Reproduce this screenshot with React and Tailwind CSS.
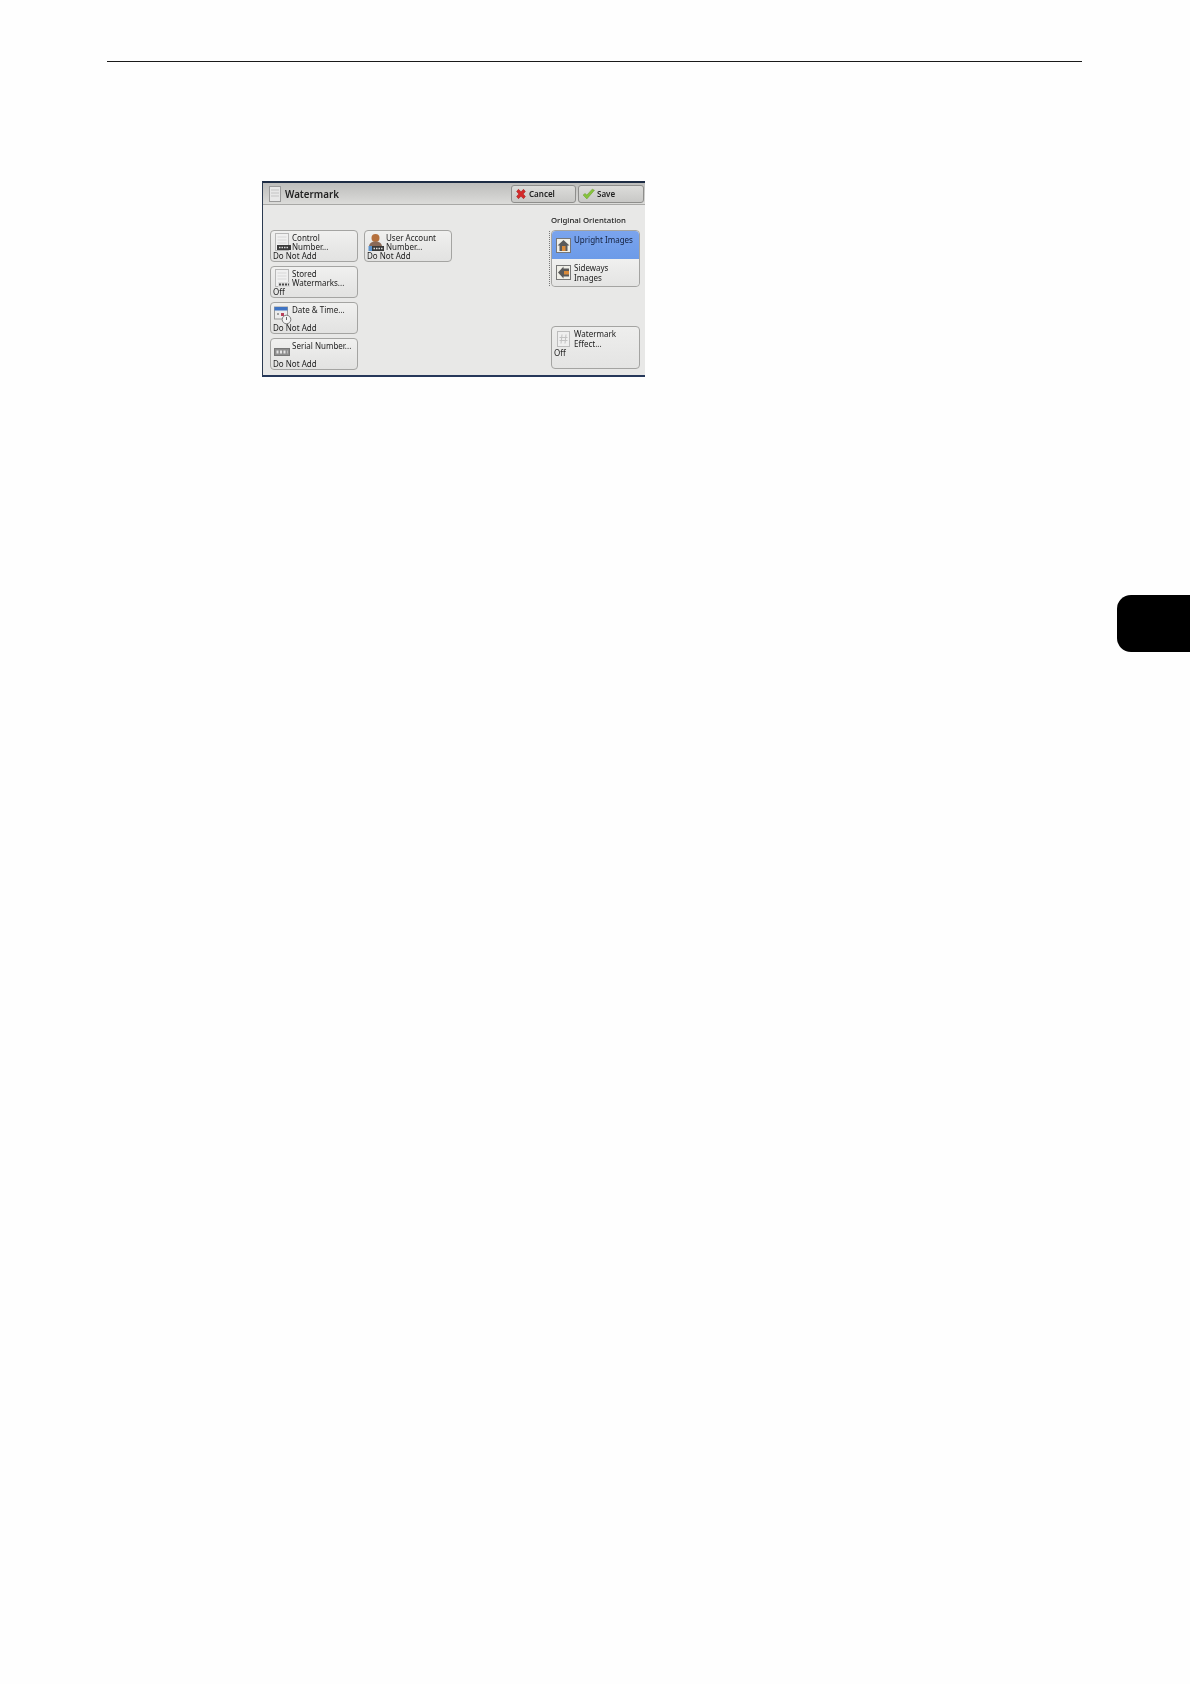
function DocIcon({ children }) {
  return (
    <svg width="17" height="20" viewBox="0 0 17 20" className="shrink-0">
      <rect x="1.500" y="0.500" width="13" height="17" fill="#f0f0f0" stroke="#b8b8b8" />
      <path d="M3.500 4h9M3.500 7h9M3.500 10h9" stroke="#d8d8d8" strokeWidth="1" />
      {children}
    </svg>
  );
}

const ControlIcon = () => (
  <DocIcon>
    <rect x="3" y="12" width="14" height="5" fill="#3c3c3c" />
    <path d="M5 14.500h10" stroke="#d8d8d8" strokeWidth="1.500" strokeDasharray="1.500 1" />
  </DocIcon>
);

const StoredIcon = () => (
  <DocIcon>
    <rect x="4" y="13" width="12" height="5" fill="#dcdcdc" />
    <path d="M5 15.500h10" stroke="#4a4a4a" strokeWidth="2" strokeDasharray="2 1" />
  </DocIcon>
);

const DateIcon = () => (
  <svg width="18" height="20" viewBox="0 0 18 20" className="shrink-0">
    <rect x="0.500" y="2" width="13" height="12" fill="#ececec" stroke="#9a9a9a" />
    <rect x="0.500" y="2" width="13" height="3.500" fill="#3f74c4" />
    <rect x="7" y="8" width="3" height="3" fill="#b8405a" />
    <rect x="3" y="8" width="2" height="2" fill="#a0a0a0" />
    <circle cx="12.500" cy="14.500" r="4.300" fill="#f4f4f4" stroke="#7c7c7c" />
    <path d="M12.500 12v3" stroke="#666" strokeWidth="1" />
  </svg>
);

const SerialIcon = () => (
  <svg width="17" height="20" viewBox="0 0 17 20" className="shrink-0">
    <rect x="0.500" y="7.500" width="15" height="7" fill="#8e8e8e" stroke="#777" />
    <path d="M2.500 11h11" stroke="#e4e4e4" strokeWidth="3" strokeDasharray="2 1.500" />
  </svg>
);

const UserIcon = () => (
  <svg width="17" height="20" viewBox="0 0 17 20" className="shrink-0">
    <circle cx="7.500" cy="5" r="4" fill="#b5703c" />
    <path d="M1 14c0-4 3-5.500 6.500-5.500S14 10 14 14z" fill="#8a6a58" />
    <rect x="0.500" y="13" width="4" height="5" fill="#5b93cf" />
    <rect x="4" y="13" width="12" height="5" fill="#3a3a3a" />
    <path d="M5.500 15.500h9" stroke="#ddd" strokeWidth="1.500" strokeDasharray="1.500 1" />
  </svg>
);

const EffectIcon = () => (
  <svg width="13" height="16" viewBox="0 0 13 16" className="shrink-0">
    <rect x="0.500" y="0.500" width="12" height="15" fill="#efefef" stroke="#bdbdbd" />
    <path d="M5 3.500l-1 9M9 3.500l-1 9M2.500 6.500h8M2.500 9.500h8" stroke="#c2c2c2" strokeWidth="1" fill="none" />
  </svg>
);

const HouseUp = () => (
  <svg width="15" height="15" viewBox="0 0 15 15" className="shrink-0">
    <rect x="0.500" y="0.500" width="14" height="14" fill="#f0efe8" stroke="#777" />
    <path d="M7.500 2L1.500 7.500h2V13h8V7.500h2z" fill="#5a5a5a" />
    <rect x="6" y="8" width="3.500" height="5" fill="#d98a3a" />
  </svg>
);

const HouseSide = () => (
  <svg width="15" height="15" viewBox="0 0 15 15" className="shrink-0">
    <rect x="0.500" y="0.500" width="14" height="14" fill="#f0efe8" stroke="#777" />
    <path d="M2 7.500L7.500 1.500v2H13v8H7.500v2z" fill="#5a5a5a" />
    <rect x="8" y="6" width="5" height="3.500" fill="#d98a3a" />
  </svg>
);

function FeatureButton({ icon, lines, status }) {
  return (
    <div className="h-[32px] w-[88px] rounded-[4px] border border-[#a4a4a2] bg-gradient-to-b from-[#f0f0ef] to-[#e2e2e1] pl-[2px] flex flex-col justify-between pb-[1px]">
      <div className="h-[16px] flex items-start gap-[1px] pl-[1px] pt-[1.500px]">
        <div className="w-[17px] h-[20px] shrink-0">{icon}</div>
        <div className="text-[8px] leading-[9.500px] text-[#222] whitespace-nowrap">
          {lines.map((l) => <div key={l}>{l}</div>)}
        </div>
      </div>
      <div className="text-[8px] leading-[9px] text-[#222]">{status}</div>
    </div>
  );
}

export default function App() {
  return (
    <div className="relative min-h-[1684px] bg-[#fefefe] flex flex-col font-['Noto_Sans',sans-serif]">
      <div className="mt-[61px] ml-[107px] mr-[108px] h-px bg-[#1a1a1a]" />

      <div className="mt-[119px] ml-[262px] w-[383px] h-[196px] flex flex-col bg-[#e8e8e7] border-t-2 border-b-2 border-l border-t-[#1d2c44] border-b-[#26385a] border-l-[#2b3a50] blur-[0.3px]">
        <div className="h-[22px] flex items-center bg-gradient-to-b from-[#bdbdbb] to-[#dcdcda] border-b border-[#a8a8a6] pl-[6px] pr-[1px]">
          <svg width="12" height="16" viewBox="0 0 12 16" className="shrink-0">
            <rect x="0.500" y="0.500" width="11" height="15" fill="#e8e8e8" stroke="#9a9a9a" />
            <path d="M2 4h8M2 7h8M2 10h8" stroke="#c4c4c4" />
          </svg>
          <div className="ml-[4px] pt-[3px] text-[9.800px] font-semibold text-[#222] flex-1">Watermark</div>
          <div className="flex gap-[2px]">
            <div className="w-[65px] h-[18px] rounded-[3px] border border-[#8e8e8c] bg-gradient-to-b from-[#dcdcda] to-[#c8c8c6] flex items-center pl-[3px] gap-[2px]">
              <svg width="12" height="12" viewBox="0 0 11 11"><path d="M1.500 3.200L3.200 1.200 5.500 3.500 7.800 1.200 9.500 3.200 7.500 5.500 9.500 7.800 7.800 9.800 5.500 7.500 3.200 9.800 1.500 7.800 3.500 5.500z" fill="#d42a2a" stroke="#a01c1c" strokeWidth="0.500" /></svg>
              <span className="pt-[1px] text-[8px] font-semibold text-[#222]">Cancel</span>
            </div>
            <div className="w-[66px] h-[18px] rounded-[3px] border border-[#8e8e8c] bg-gradient-to-b from-[#dcdcda] to-[#c8c8c6] flex items-center pl-[3px] gap-[2px]">
              <svg width="13" height="12" viewBox="0 0 12 11"><path d="M1 6.500l3.500 3.500L11.500 2 9.500 1 4.500 6.500 2.800 5z" fill="#86c43c" stroke="#6a9c2c" strokeWidth="0.500" /></svg>
              <span className="pt-[1px] text-[8px] font-semibold text-[#222]">Save</span>
            </div>
          </div>
        </div>

        <div className="flex-1 flex pl-[7px] pr-[5px]">
          <div className="flex flex-col gap-[4px] pt-[25px]">
            <FeatureButton icon={<ControlIcon />} lines={["Control", "Number..."]} status="Do Not Add" />
            <FeatureButton icon={<StoredIcon />} lines={["Stored", "Watermarks..."]} status="Off" />
            <FeatureButton icon={<DateIcon />} lines={["Date & Time..."]} status="Do Not Add" />
            <FeatureButton icon={<SerialIcon />} lines={["Serial Number..."]} status="Do Not Add" />
          </div>
          <div className="ml-[6px] pt-[25px]">
            <FeatureButton icon={<UserIcon />} lines={["User Account", "Number..."]} status="Do Not Add" />
          </div>
          <div className="ml-auto w-[89px] flex flex-col">
            <div className="mt-[8px] h-[14px] text-[7.800px] font-medium text-[#222] whitespace-nowrap leading-[14px]">Original Orientation</div>
            <div className="relative mt-[3px] h-[57px] rounded-[4px] border border-[#a4a4a2] flex flex-col overflow-visible">
              <div className="absolute -left-[3px] top-0 bottom-0 border-l border-dotted border-[#777]" />
              <div className="h-[28px] rounded-t-[4px] bg-gradient-to-b from-[#7aa4ee] to-[#6c9be8] flex items-start gap-[3px] pl-[4px] pt-[4px]">
                <div className="pt-[3px]"><HouseUp /></div>
                <div className="text-[8px] leading-[9.500px] text-[#14203c] whitespace-nowrap">Upright Images</div>
              </div>
              <div className="flex-1 rounded-b-[4px] bg-gradient-to-b from-[#f0f0ef] to-[#e4e4e3] flex items-start gap-[3px] pl-[4px] pt-[4px]">
                <div className="pt-[2px]"><HouseSide /></div>
                <div className="text-[8px] leading-[9.500px] text-[#222]">
                  <div>Sideways</div>
                  <div>Images</div>
                </div>
              </div>
            </div>
            <div className="mt-[39px] h-[43px] rounded-[4px] border border-[#a4a4a2] bg-gradient-to-b from-[#eeeeed] to-[#e4e4e3] flex flex-col pl-[2px]">
              <div className="flex items-start gap-[4px] pl-[3px] pt-[4px]">
                <EffectIcon />
                <div className="text-[8px] leading-[9.500px] text-[#222] -mt-[2px]">
                  <div>Watermark</div>
                  <div>Effect...</div>
                </div>
              </div>
              <div className="text-[8px] leading-[9px] text-[#222]">Off</div>
            </div>
          </div>
        </div>
      </div>

      <div className="mt-[218px] self-end w-[73px] h-[57px] bg-black rounded-l-[14px]" />
    </div>
  );
}
